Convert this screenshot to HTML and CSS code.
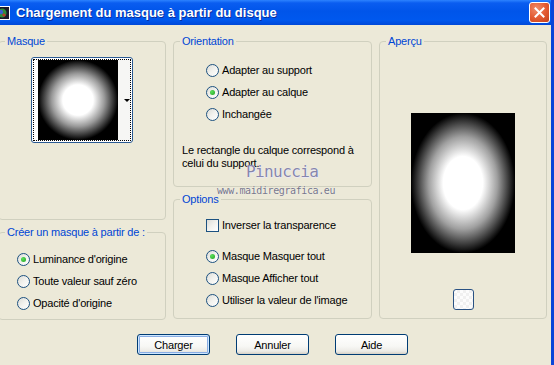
FILE: index.html
```html
<!DOCTYPE html>
<html lang="fr">
<head>
  <meta charset="UTF-8" />
  <title>Chargement du masque à partir du disque</title>
  <link rel="stylesheet" href="styles.css">
</head>
<body>

  <div class="window">
    <div class="titlebar">
      <svg class="app-icon" width="14" height="14" viewBox="0 0 14 14">
        <rect x="0.5" y="0.5" width="13" height="13" fill="#1a1a2a" stroke="#fff" />
        <circle cx="6" cy="7" r="4.5" fill="#2f8f3a" />
        <circle cx="5" cy="6" r="2.2" fill="#3b5fd0" />
        <circle cx="8" cy="9" r="1.6" fill="#c0392b" />
      </svg>
      <span class="title">Chargement du masque à partir du disque</span>
      <div class="close-btn">
        <svg width="11" height="11" viewBox="0 0 11 11">
          <path d="M1.5 1.5 L9.5 9.5 M9.5 1.5 L1.5 9.5" stroke="#fff" stroke-width="2" stroke-linecap="square" />
        </svg>
      </div>
    </div>

    <div class="panels">
      <div class="column">
        <fieldset class="box box-masque">
          <legend>Masque</legend>
          <div class="mask-select">
            <div class="mask-focus">
              <div class="mask-thumb"></div>
              <div class="mask-arrow"></div>
            </div>
          </div>
        </fieldset>

        <fieldset class="box box-source">
          <legend>Créer un masque à partir de :</legend>
          <div class="options-list">
            <div class="row"><span class="radio checked"></span>Luminance d'origine</div>
            <div class="row"><span class="radio"></span>Toute valeur sauf zéro</div>
            <div class="row"><span class="radio"></span>Opacité d'origine</div>
          </div>
        </fieldset>
      </div>

      <div class="column">
        <fieldset class="box box-orient">
          <legend>Orientation</legend>
          <div class="options-list">
            <div class="row"><span class="radio"></span>Adapter au support</div>
            <div class="row"><span class="radio checked"></span>Adapter au calque</div>
            <div class="row"><span class="radio"></span>Inchangée</div>
          </div>
          <p class="note">Le rectangle du calque correspond à<br>celui du support.</p>
        </fieldset>

        <fieldset class="box box-options">
          <legend>Options</legend>
          <div class="options-list">
            <div class="row"><span class="checkbox"></span>Inverser la transparence</div>
            <div class="radio-group">
              <div class="row"><span class="radio checked"></span>Masque Masquer tout</div>
              <div class="row"><span class="radio"></span>Masque Afficher tout</div>
              <div class="row"><span class="radio"></span>Utiliser la valeur de l'image</div>
            </div>
          </div>
        </fieldset>
      </div>

      <div class="column">
        <fieldset class="box box-preview">
          <legend>Aperçu</legend>
          <div class="preview-img"></div>
          <div class="small-btn"></div>
        </fieldset>
      </div>
    </div>

    <div class="actions">
      <button class="btn btn-default">Charger</button>
      <button class="btn">Annuler</button>
      <button class="btn">Aide</button>
    </div>
  </div>

  <div class="watermark">
    <div class="wm-name">Pinuccia</div>
    <div class="wm-site">www.maidiregrafica.eu</div>
  </div>

</body>
</html>
```

FILE: styles.css
```css
body {
  margin: 0;
  width: 554px;
  height: 365px;
  overflow: hidden;
  position: relative;
  background: #ECE9D8;
  font-family: "Liberation Sans", Arial, sans-serif;
  font-size: 11px;
  letter-spacing: -0.2px;
  color: #000;
}
.window {
  height: 365px;
  box-sizing: border-box;
  border-right: 3px solid #0B45D8;
}

/* title bar */
.titlebar {
  height: 25px;
  display: flex;
  align-items: center;
  background: linear-gradient(#2C83FF 0%, #0A5DF0 12%, #0055EA 45%, #0058EE 80%, #0048D8 100%);
}
.app-icon {
  margin-left: -4px;
  flex: none;
}
.title {
  margin-left: 6px;
  color: #fff;
  font-weight: bold;
  font-size: 13px;
  letter-spacing: 0;
  text-shadow: 1px 1px 0 #0A2F9C;
}
.close-btn {
  margin-left: auto;
  margin-right: 1px;
  width: 19px;
  height: 19px;
  border: 1px solid #fff;
  border-radius: 3px;
  background: radial-gradient(circle at 35% 30%, #F08C6A 0%, #E2582F 55%, #C2411C 100%);
  display: flex;
  align-items: center;
  justify-content: center;
}

/* panels */
.panels {
  display: grid;
  grid-template-columns: 168px 199px 168px;
  column-gap: 7px;
  margin-left: -2px;
  padding-top: 9px;
}
.column {
  display: flex;
  flex-direction: column;
  gap: 5px;
}
.box {
  margin: 0;
  padding: 0;
  min-width: 0;
  box-sizing: border-box;
  border: 1px solid #D0D0BF;
  border-radius: 4px;
}
.box legend {
  margin-left: 6px;
  padding: 0 2px;
  line-height: 14px;
  color: #0046D5;
}
.box-masque { height: 186px; }
.box-source { height: 95px; }
.box-orient { height: 153px; }
.box-options { height: 127px; }
.box-preview { height: 285px; }

.row {
  height: 22px;
  display: flex;
  align-items: center;
  gap: 3px;
}
.box-source .options-list {
  padding: 9px 0 0 18px;
}
.box-orient .options-list {
  padding: 11px 0 0 32px;
}
.box-options .options-list {
  padding: 8px 0 0 32px;
}
.radio-group {
  margin-top: 9px;
}
.note {
  margin: 19px 0 0 8px;
  line-height: 13px;
}

/* radios and checkbox */
.radio, .checkbox {
  width: 13px;
  height: 13px;
  box-sizing: border-box;
  border: 1px solid #1C5180;
  background: linear-gradient(135deg, #DCDCD7 0%, #F2F2EE 50%, #fff 100%);
  display: flex;
  align-items: center;
  justify-content: center;
  flex: none;
}
.radio {
  border-radius: 50%;
}
.radio.checked::after {
  content: "";
  width: 5px;
  height: 5px;
  border-radius: 50%;
  background: radial-gradient(circle at 35% 35%, #5BE05B, #21A121);
}

/* mask selector */
.mask-select {
  width: 102px;
  height: 86px;
  margin: 9px auto 0;
  box-sizing: border-box;
  border: 1px solid #2B5A92;
  border-radius: 3px;
  padding: 1px;
  background: #fff;
}
.mask-focus {
  height: 100%;
  box-sizing: border-box;
  border: 1px dotted #000;
  display: flex;
  padding-left: 4px;
}
.mask-thumb {
  width: 80px;
  height: 80px;
  background: radial-gradient(circle closest-side, #fff 0%, #fff 38%, #9a9a9a 66%, #000 100%);
}
.mask-arrow {
  flex: 1;
  background: #F6F6F4;
  display: flex;
  align-items: center;
  justify-content: center;
}
.mask-arrow::after {
  content: "";
  margin-left: 6px;
  border-left: 3px solid transparent;
  border-right: 3px solid transparent;
  border-top: 3px solid #000;
}

/* preview */
.preview-img {
  width: 104px;
  height: 140px;
  margin: 65px auto 0;
  background: radial-gradient(ellipse closest-side, #fff 0%, #fff 38%, #a0a0a0 66%, #000 100%);
}
.small-btn {
  width: 21px;
  height: 21px;
  margin: 36px auto 0;
  box-sizing: border-box;
  border: 1px solid #2A5283;
  border-radius: 3px;
  background-color: #fafafa;
  background-image: conic-gradient(#f0f0f0 25%, #fcfcfc 0 50%, #f0f0f0 0 75%, #fcfcfc 0);
  background-size: 6px 6px;
}

/* buttons */
.actions {
  display: flex;
  gap: 26px;
  padding: 14px 0 0 137px;
}
.btn {
  width: 73px;
  height: 21px;
  padding: 0;
  border: 1px solid #003C74;
  border-radius: 3px;
  background: linear-gradient(#FFFFFF 0%, #F7F7F4 60%, #ECEBE6 85%, #D6D0C5 100%);
  font-family: "Liberation Sans", Arial, sans-serif;
  font-size: 11px;
  letter-spacing: -0.2px;
  color: #000;
}
.btn-default {
  box-shadow: inset 0 0 0 1px #CEE7FF, inset 0 0 0 2px #89ADE4;
}

/* watermark */
.watermark {
  position: absolute;
  left: 0;
  top: 0;
  font-family: "DejaVu Sans Mono", monospace;
  pointer-events: none;
}
.wm-name {
  position: absolute;
  left: 246px;
  top: 163px;
  font-size: 16px;
  line-height: 18px;
  letter-spacing: -0.6px;
  color: #8686AC;
  text-shadow: 0 0 1px #fff, 1px 1px 0 #E8E6F0;
}
.wm-site {
  position: absolute;
  left: 217px;
  top: 185px;
  font-size: 10px;
  line-height: 12px;
  letter-spacing: -0.4px;
  color: #76768A;
  text-shadow: 0 0 1px #fff;
}
```
